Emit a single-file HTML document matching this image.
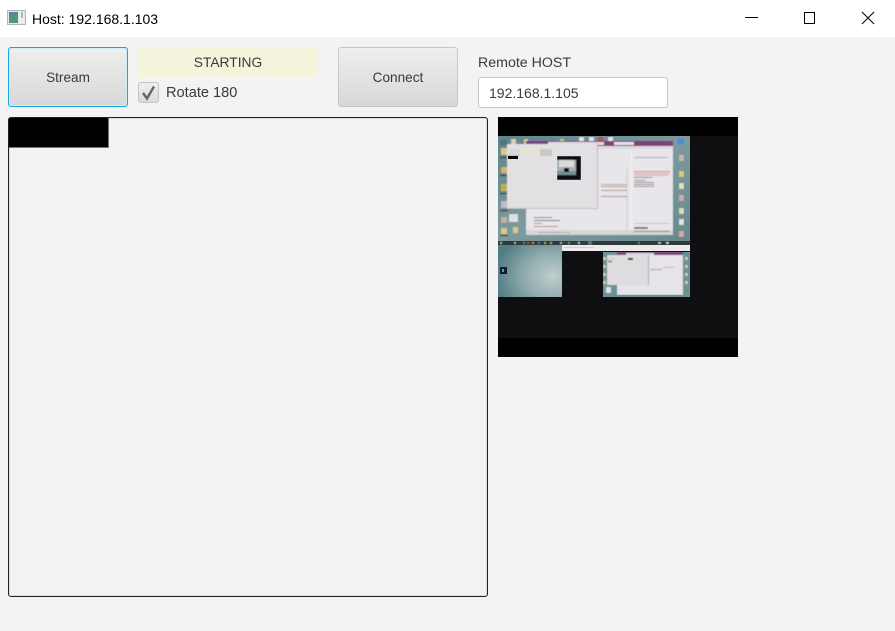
<!DOCTYPE html>
<html>
<head>
<meta charset="utf-8">
<style>
html,body{margin:0;padding:0;}
body{width:895px;height:631px;position:relative;overflow:hidden;background:#f3f3f3;font-family:"Liberation Sans",sans-serif;color:#3a3a3a;}
.a{position:absolute;box-sizing:border-box;}
.t{position:absolute;white-space:nowrap;font-size:14px;line-height:18px;}
.btn{position:absolute;box-sizing:border-box;width:120px;height:60px;top:47px;border-radius:3px;background:linear-gradient(#efefef,#d7d7d7);border:1px solid #c6c6c6;font-size:13.6px;text-align:center;line-height:59px;color:#3a3a3a;}
</style>
</head>
<body>
<div class="a" style="left:0;top:0;width:895px;height:37px;background:#fff;"></div>
<svg class="a" style="left:7px;top:10px;" width="19" height="15" viewBox="0 0 19 15">
<defs><linearGradient id="ig" x1="0" y1="0" x2="0" y2="1"><stop offset="0" stop-color="#5a8592"/><stop offset="1" stop-color="#4c9a80"/></linearGradient></defs>
<rect x="0" y="0" width="19" height="15" fill="#b4b7b9"/>
<rect x="1" y="1" width="17" height="13" fill="#e6e8e8"/>
<rect x="2" y="2" width="9" height="11" fill="url(#ig)"/>
<rect x="12" y="2" width="5" height="11" fill="#eef0f0"/>
<rect x="14" y="2" width="2" height="6" fill="#a4b6ba"/>
</svg>
<div class="t" style="left:32px;top:10px;color:#000;font-size:14px;">Host: 192.168.1.103</div>
<svg class="a" style="left:740px;top:5px;" width="150" height="26" viewBox="0 0 150 26" fill="none" stroke="#000" stroke-width="1" shape-rendering="crispEdges">
<path d="M5 12.5H18"/>
<rect x="64.5" y="7.5" width="10" height="11"/>
<path d="M122 7L134 19M134 7L122 19" shape-rendering="auto"/>
</svg>

<div class="btn" style="left:8px;border:1px solid #14a8e0;box-shadow:inset 0 0 0 1px #d6ecf5;">Stream</div>
<div class="a" style="left:138px;top:47px;width:180px;height:30px;background:#f4f4dc;"></div>
<div class="t" style="left:138px;top:54px;width:180px;text-align:center;font-size:13.8px;">STARTING</div>
<div class="a" style="left:138px;top:82px;width:21px;height:21px;border:1px solid #c4c4c4;border-radius:3px;background:linear-gradient(#efefef,#dcdcdc);"></div>
<svg class="a" style="left:138px;top:82px;" width="21" height="21" viewBox="0 0 21 21" fill="none"><path d="M5 11L9 16.5L16 4.5" stroke="#666" stroke-width="2.4"/></svg>
<div class="t" style="left:166px;top:84px;font-size:14.6px;">Rotate 180</div>
<div class="btn" style="left:338px;">Connect</div>
<div class="t" style="left:478px;top:54px;font-size:14.2px;">Remote HOST</div>
<div class="a" style="left:478px;top:77px;width:190px;height:31px;background:#fff;border:1px solid #c8c8c8;border-radius:3px;"></div>
<div class="t" style="left:489px;top:84px;font-size:14px;">192.168.1.105</div>

<div class="a" style="left:8px;top:117px;width:480px;height:480px;border:1px solid #222;border-radius:3px;background:#f3f3f3;box-shadow:inset 1px 1px 0 #dcdcdc,inset -1px -1px 0 #dcdcdc;"></div>
<div class="a" style="left:9px;top:118px;width:100px;height:30px;background:#000;border-right:1px solid #777;border-bottom:1px solid #777;"></div>

<svg class="a" style="left:498px;top:117px;" width="240" height="240" viewBox="0 0 240 240" shape-rendering="crispEdges">
<defs>
<linearGradient id="d" x1="0" y1="0" x2="1" y2="1"><stop offset="0" stop-color="#5f858c"/><stop offset=".5" stop-color="#7d9a9e"/><stop offset="1" stop-color="#66898e"/></linearGradient>
<radialGradient id="w" cx=".85" cy=".6" r=".9"><stop offset="0" stop-color="#c0cdcd"/><stop offset=".5" stop-color="#8fabae"/><stop offset="1" stop-color="#517d85"/></radialGradient>
<filter id="b" x="0" y="0" width="100%" height="100%"><feGaussianBlur stdDeviation="0.45"/></filter>
</defs>
<rect width="240" height="240" fill="#0f0e11"/>
<rect width="240" height="19" fill="#000"/>
<rect y="221" width="240" height="19" fill="#000"/>
<rect x="0" y="19" width="192" height="106" fill="url(#d)"/>
<g filter="url(#b)">
<!-- desktop icons left -->
<g fill="#d9c98a">
<rect x="3" y="31" width="6" height="7"/><rect x="3" y="50" width="6" height="6" fill="#d8b468"/><rect x="3" y="67" width="6" height="7" fill="#c8b048"/><rect x="3" y="84" width="6" height="7" fill="#c8b8c0"/><rect x="3" y="100" width="6" height="6" fill="#c8b0a0"/><rect x="3" y="111" width="6" height="6"/>
<rect x="13" y="22" width="5" height="6" fill="#dcd0b0"/><rect x="26" y="22" width="4" height="6"/><rect x="62" y="22" width="4" height="6"/><rect x="11" y="97" width="9" height="8" fill="#e0e0e0"/><rect x="15" y="110" width="5" height="6"/>
</g>
<rect x="2" y="23" width="7" height="5" fill="#51707f"/>
<rect x="2" y="40" width="8" height="1" fill="#334"/><rect x="2" y="58" width="8" height="1" fill="#334"/><rect x="2" y="76" width="8" height="1" fill="#334"/><rect x="2" y="93" width="8" height="1" fill="#334"/><rect x="2" y="118" width="8" height="1" fill="#334"/>
<g fill="#e8e4e4"><rect x="81" y="20" width="5" height="6"/><rect x="91" y="20" width="5" height="6"/><rect x="110" y="20" width="5" height="6"/></g>
<rect x="100" y="20" width="5" height="6" fill="#c05050"/>
<!-- right icons -->
<g><rect x="180" y="22" width="6" height="5" fill="#3d8fe0"/><rect x="181" y="38" width="5" height="6" fill="#c8b8a8"/><rect x="181" y="54" width="5" height="6" fill="#e0c870"/><rect x="181" y="66" width="5" height="6" fill="#e8dcc8"/><rect x="181" y="78" width="5" height="6" fill="#d8a8a8"/><rect x="181" y="91" width="5" height="6" fill="#dcdcc0"/><rect x="181" y="102" width="5" height="6" fill="#e4e4e8"/><rect x="181" y="114" width="5" height="6" fill="#dca8a0"/></g>
<!-- editor window -->
<rect x="28" y="24" width="147" height="94" fill="#e8e6ea"/>
<rect x="28" y="24" width="147" height="5" fill="#7d3f7a"/>
<rect x="50" y="25" width="56" height="3" fill="#e0dcdc"/>
<rect x="116" y="25" width="20" height="3" fill="#e4e4ea"/>
<rect x="28" y="29" width="147" height="3" fill="#dcdadc"/>
<rect x="133" y="32" width="1" height="82" fill="#f6f4f6"/>
<rect x="128" y="50" width="2" height="64" fill="#dcdadc"/>
<rect x="28" y="113" width="147" height="5" fill="#d8d6d8"/>
<!-- code lines -->
<g fill="#9c8c94">
<rect x="103" y="67" width="26" height="1" fill="#c0a080"/>
<rect x="103" y="79" width="26" height="1" fill="#a09088"/>
<rect x="103" y="73" width="26" height="1" fill="#c08890"/>
<rect x="103" y="69" width="26" height="1" fill="#8fa880"/>
<rect x="136" y="40" width="34" height="1" fill="#b8a0c0"/>
<rect x="136" y="54" width="36" height="1" fill="#d88878"/>
<rect x="136" y="56" width="36" height="1" fill="#e09080"/>
<rect x="136" y="58" width="34" height="1" fill="#e8a090"/>
<rect x="136" y="60" width="18" height="1" fill="#7c8ca0"/>
<rect x="136" y="63" width="12" height="1"/>
<rect x="136" y="65" width="20" height="1"/>
<rect x="136" y="67" width="20" height="1"/>
<rect x="136" y="69" width="20" height="1"/>
<rect x="136" y="106" width="36" height="1" fill="#c8c4c8"/>
<rect x="136" y="110" width="14" height="2" fill="#807c80"/>
<rect x="136" y="114" width="36" height="1" fill="#888"/>
<rect x="36" y="100" width="18" height="1" fill="#88809c"/>
<rect x="36" y="103" width="26" height="1" fill="#706c7c"/>
<rect x="36" y="106" width="8" height="1" fill="#88a0b0"/>
<rect x="36" y="109" width="24" height="1" fill="#b08890"/>
<rect x="40" y="115" width="32" height="1" fill="#b0aeb0"/>
</g>
<!-- nested app window -->
<rect x="9" y="27" width="91" height="65" fill="#bdbcbe"/>
<rect x="9" y="27" width="90" height="64" fill="#e2e0e2"/>
<rect x="10" y="32" width="12" height="7" fill="#d8d8d8"/>
<rect x="10" y="38" width="12" height="1" fill="#7fb8d0"/>
<rect x="23" y="32" width="18" height="4" fill="#e4e4c8"/>
<rect x="42" y="32" width="12" height="7" fill="#c8c8c8"/>
</g>
<rect x="10" y="39" width="10" height="3" fill="#000"/>
<g filter="url(#b)">
<rect x="59" y="39" width="24" height="24" fill="#100f12"/>
<rect x="59" y="43" width="19" height="11" fill="#a8b0b0"/>
<rect x="61" y="43" width="15" height="7" fill="#dcdadc"/>
<rect x="59" y="54" width="19" height="4" fill="#6f9095"/>
<rect x="66" y="51" width="5" height="4" fill="#111"/>
</g>
<!-- taskbar -->
<rect x="0" y="124" width="192" height="4" fill="#31393b"/>
<g filter="url(#b)">
<rect x="2" y="125" width="2" height="2" fill="#cfd4d4"/><rect x="16" y="125" width="2" height="2" fill="#c8ccd0"/><rect x="25" y="125" width="2" height="2" fill="#70a050"/><rect x="29" y="125" width="2" height="2" fill="#c05050"/><rect x="34" y="125" width="2" height="2" fill="#e0a040"/><rect x="40" y="125" width="2" height="2" fill="#5090d0"/><rect x="46" y="125" width="2" height="2" fill="#d0d040"/><rect x="52" y="125" width="2" height="2" fill="#e0c060"/><rect x="62" y="125" width="2" height="2" fill="#d0c0c0"/><rect x="70" y="125" width="2" height="2" fill="#80b060"/><rect x="80" y="125" width="2" height="2" fill="#e0e0e0"/><rect x="90" y="124" width="4" height="4" fill="#6a7476"/>
<rect x="140" y="125" width="2" height="2" fill="#50b040"/><rect x="160" y="125" width="3" height="2" fill="#ccc"/><rect x="168" y="125" width="3" height="2" fill="#ddd"/>
</g>
<!-- second monitor -->
<rect x="0" y="128" width="64" height="52" fill="url(#w)"/>
<rect x="2" y="150" width="7" height="7" fill="#161b30"/>
<rect x="4" y="152" width="2" height="3" fill="#5d8fc8"/>
<rect x="64" y="128" width="128" height="6" fill="#eeeaec"/>
<rect x="66" y="130" width="30" height="1" fill="#d8b8a0" opacity=".6"/>
<rect x="105" y="135" width="87" height="45" fill="#6f9095"/>
<g filter="url(#b)">
<rect x="119" y="135" width="66" height="43" fill="#e6e4e8"/>
<rect x="119" y="135" width="66" height="3" fill="#7d3f7a"/>
<rect x="128" y="136" width="28" height="2" fill="#dcd8d8"/>
<rect x="109" y="138" width="41" height="30" fill="#dedcde"/>
<rect x="150" y="138" width="1" height="30" fill="#aaa"/>
<rect x="110" y="141" width="5" height="3" fill="#cdd5d8"/>
<rect x="110" y="144" width="4" height="1" fill="#000"/>
<rect x="130" y="141" width="5" height="1" fill="#111"/>
<rect x="130" y="142" width="5" height="1" fill="#222"/>
<rect x="152" y="152" width="12" height="1" fill="#90a890"/>
<rect x="165" y="150" width="12" height="1" fill="#dca8a0"/>
<rect x="108" y="170" width="5" height="6" fill="#e0e4ea"/>
<g fill="#d8cc90"><rect x="105" y="140" width="3" height="3"/><rect x="105" y="148" width="3" height="3"/><rect x="105" y="156" width="3" height="3"/><rect x="105" y="164" width="3" height="3"/><rect x="187" y="140" width="3" height="3"/><rect x="187" y="148" width="3" height="3"/><rect x="187" y="156" width="3" height="3"/><rect x="187" y="164" width="3" height="3"/></g>
<rect x="187" y="135" width="3" height="2" fill="#3d8fe0"/>
</g>
</svg>
</body>
</html>
